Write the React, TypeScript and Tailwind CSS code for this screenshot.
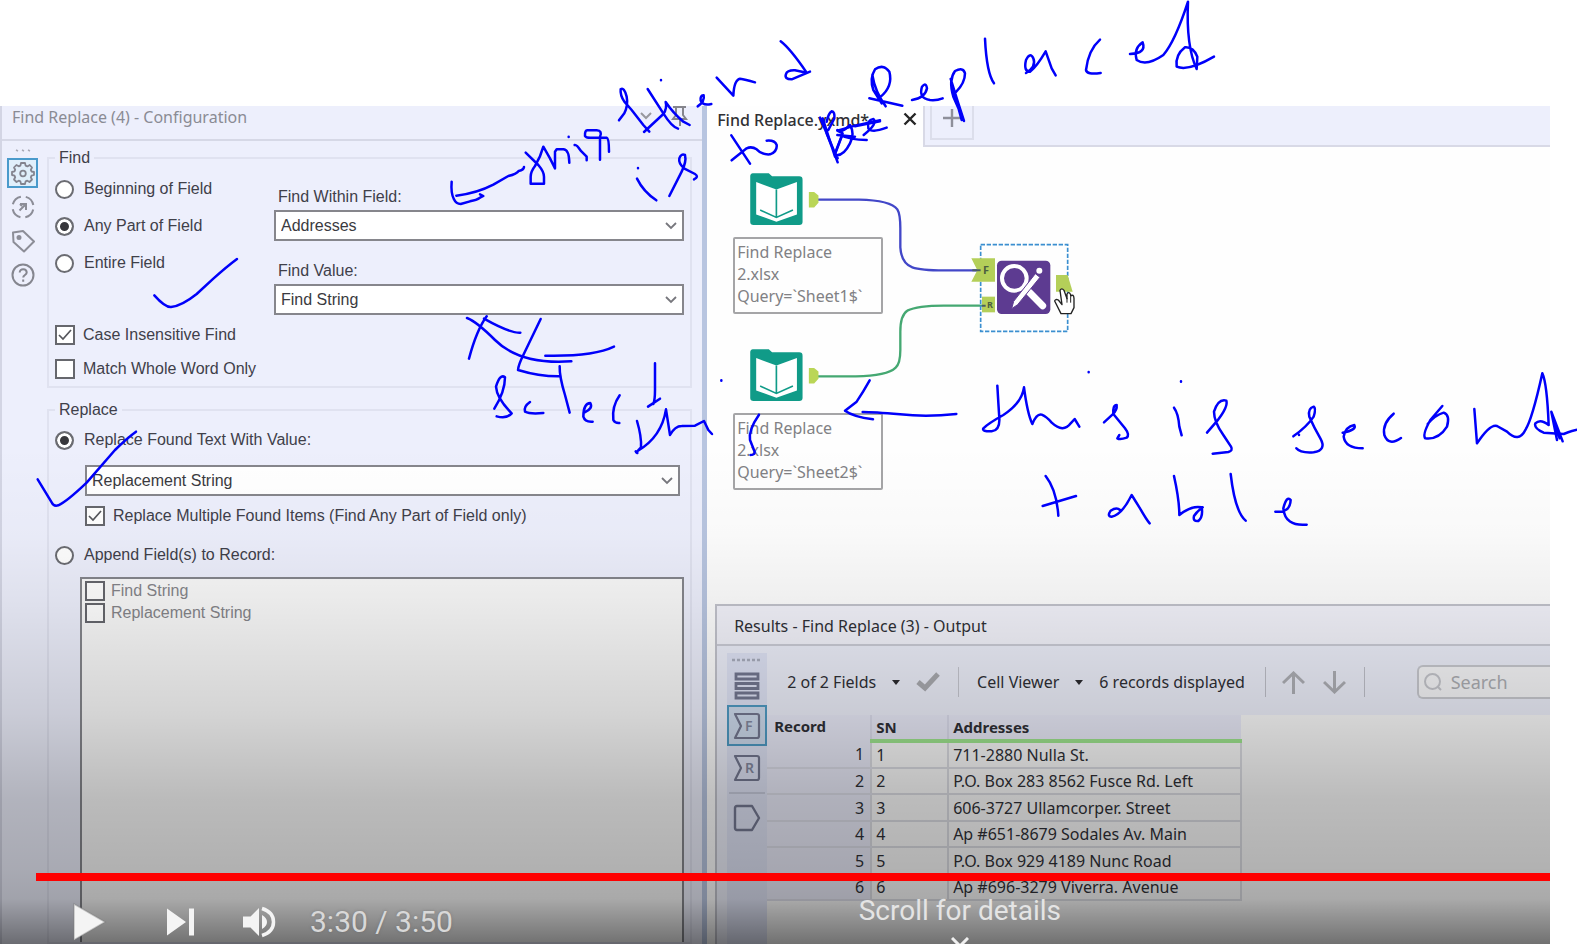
import type { ReactNode } from "react";

/* ---------- shared form parts ---------- */

function Radio({ name, label, checked }: { name: string; label: string; checked?: boolean }) {
  return (
    <label className="flex items-center gap-2.5 leading-5">
      <input
        type="radio"
        name={name}
        defaultChecked={checked}
        className="size-[19px] shrink-0 appearance-none rounded-full border-2 border-[#6b6c72] bg-white checked:bg-[#38383c] checked:shadow-[inset_0_0_0_3px_white]"
      />
      <span className="whitespace-nowrap">{label}</span>
    </label>
  );
}

function Check({ label, checked, muted }: { label: string; checked?: boolean; muted?: boolean }) {
  return (
    <label className={muted ? "flex items-center gap-1.5 leading-5 text-[#85858a]" : "flex items-center gap-2 leading-5"}>
      <span className="grid shrink-0 place-items-center">
        <input
          type="checkbox"
          defaultChecked={checked}
          className="peer col-start-1 row-start-1 size-5 appearance-none border-2 border-[#66676d] bg-white"
        />
        <svg viewBox="0 0 20 20" className="pointer-events-none invisible col-start-1 row-start-1 size-5 peer-checked:visible">
          <path d="M4 10l4 4 8-9" fill="none" stroke="#55565c" strokeWidth="1.7" />
        </svg>
      </span>
      <span className="whitespace-nowrap">{label}</span>
    </label>
  );
}

function Select({ id, value, label }: { id: string; value: string; label?: string }) {
  return (
    <div className="grid">
      <select
        id={id}
        aria-label={label}
        className="col-start-1 row-start-1 h-[31px] w-full appearance-none border-2 border-[#86868c] bg-white pl-[5px] text-base text-[#3a3a40]"
      >
        <option>{value}</option>
      </select>
      <svg viewBox="0 0 12 8" className="pointer-events-none col-start-1 row-start-1 mr-[7px] h-2 w-3 self-center justify-self-end">
        <path d="M1 1l5 5 5-5" fill="none" stroke="#77777d" strokeWidth="1.8" />
      </svg>
    </div>
  );
}

/* ---------- configuration panel ---------- */

function SideTools() {
  return (
    <nav className="flex w-[45px] shrink-0 flex-col items-center pt-2" aria-label="Configuration sections">
      <svg viewBox="0 0 16 4" className="mr-1 h-1 w-4">
        <path d="M1 1l2 1M7 1l2 1M13 1l2 1" stroke="#a9aab5" strokeWidth="1.5" />
      </svg>
      <button aria-label="Settings" className="mt-[5px] mr-1 grid h-[30px] w-[31px] place-items-center border-2 border-[#4a9acb] bg-[#e0effb]">
        <svg viewBox="0 0 24 24" className="size-6" fill="none" stroke="#83848f" strokeWidth="1.8" strokeLinejoin="round">
          <path d="M10 2h4l.6 2.6 1.8.8L18.700 4l2.300 2.500-1.200 2.300.7 1.700L23 11v3l-2.500.7-.7 1.700L21 18.500 18.500 21l-2.200-1.300-1.700.7L14 23h-4l-.6-2.600-1.700-.7L5.500 21 3 18.500l1.200-2.200-.7-1.700L1 14v-3l2.500-.6.7-1.700L3 6.500 5.400 4l2.300 1.300 1.700-.7z" />
          <circle cx="12" cy="12.500" r="2.800" />
        </svg>
      </button>
      <button aria-label="Navigation" className="mt-[7px] mr-1">
        <svg viewBox="0 0 24 24" className="size-6" fill="none" stroke="#8c8d97" strokeWidth="2">
          <circle cx="12" cy="12" r="10.500" strokeDasharray="11.500 5" strokeDashoffset="-2.500" />
          <path d="M8.500 15.500l6-6M9 9h6v6M9 9l2 2" />
        </svg>
      </button>
      <button aria-label="Annotation" className="mt-2.5 mr-1">
        <svg viewBox="0 0 24 24" className="size-6" fill="none" stroke="#8c8d97" strokeWidth="2" strokeLinejoin="round">
          <path d="M2 3.500l10-1.500 11 10.500L13 22.500 2.500 13z" />
          <circle cx="8" cy="8.500" r="1.500" fill="#8c8d97" />
        </svg>
      </button>
      <button aria-label="Help" className="mt-2.5 mr-1">
        <svg viewBox="0 0 24 24" className="size-6" fill="none" stroke="#85868f" strokeWidth="2">
          <circle cx="12" cy="12" r="10.500" />
          <path d="M8.700 9.500c0-4.500 7-4 7 0 0 2.500-3.500 2.500-3.500 5M12.200 16.500v2.200" />
        </svg>
      </button>
    </nav>
  );
}

function Group({ title, className, children }: { title: string; className: string; children: ReactNode }) {
  return (
    <fieldset className={`min-w-0 border-2 border-[#e0e2f0] ${className}`}>
      <legend className="h-5 px-1 leading-5">{title}</legend>
      {children}
    </fieldset>
  );
}

function ConfigurationPanel() {
  return (
    <section className="flex w-[45.3%] shrink-0 flex-col border-l-2 border-[#d3d5e4] bg-[#edeffc] font-['Liberation_Sans',sans-serif] text-base text-[#3f404a]">
      <header className="flex h-[35px] shrink-0 items-start justify-between border-b-2 border-[#d6d8e6] pr-3 pl-2.5 font-['Noto_Sans',sans-serif] text-base leading-[22px] text-[#8a8b94]">
        <h1>Find Replace (4) - Configuration</h1>
        <span className="flex gap-4">
          <button aria-label="Panel menu">
            <svg viewBox="0 0 16 20" className="h-5 w-4" fill="none" stroke="#98989e" strokeWidth="2">
              <path d="M3 7l5 5 5-5" />
            </svg>
          </button>
          <button aria-label="Pin panel">
            <svg viewBox="0 0 20 20" className="size-5" fill="none" stroke="#85858c" strokeWidth="2">
              <path d="M3 1h13M6 1v8l-3 4h13l-3-4V1M10 13v7" />
            </svg>
          </button>
        </span>
      </header>
      <div className="flex grow">
        <SideTools />
        <div className="flex min-w-0 grow flex-col pt-[7px] pr-2.5">
          <Group title="Find" className="h-[240px] px-1.5">
            <div className="flex">
              <div className="flex w-[219px] shrink-0 flex-col gap-px pt-[3px]">
                <div className="flex h-9 items-center"><Radio name="find-mode" label="Beginning of Field" /></div>
                <div className="flex h-9 items-center"><Radio name="find-mode" label="Any Part of Field" checked /></div>
                <div className="flex h-9 items-center"><Radio name="find-mode" label="Entire Field" /></div>
              </div>
              <div className="flex min-w-0 grow flex-col pt-[19px]">
                <label htmlFor="within" className="mb-[3px] ml-1 h-5 leading-5">Find Within Field:</label>
                <Select id="within" value="Addresses" />
                <label htmlFor="value" className="mt-5 mb-[3px] ml-1 h-5 leading-5">Find Value:</label>
                <Select id="value" value="Find String" />
              </div>
            </div>
            <div className="mt-2.5 flex flex-col gap-3.5">
              <Check label="Case Insensitive Find" checked />
              <Check label="Match Whole Word Only" />
            </div>
          </Group>
          <Group title="Replace" className="mt-3 flex grow flex-col pr-1.5 pl-1.5">
            <div className="flex h-full flex-col pt-2.5">
              <div className="flex h-5 items-center">
                <Radio name="replace-mode" label="Replace Found Text With Value:" checked />
              </div>
              <div className="mt-[15px] mr-1 ml-[30px]">
                <Select id="replacement" label="Replace Found Text With Value" value="Replacement String" />
              </div>
              <div className="mt-2.5 ml-[30px]">
                <Check label="Replace Multiple Found Items (Find Any Part of Field only)" checked />
              </div>
              <div className="mt-[19px] flex h-5 items-center">
                <Radio name="replace-mode" label="Append Field(s) to Record:" />
              </div>
              <div className="mt-3 ml-[25px] flex grow flex-col gap-0.5 border-2 border-b-0 border-[#85868c] bg-[#f9f9f9] px-[3px] pt-0.5">
                <Check label="Find String" muted />
                <Check label="Replacement String" muted />
              </div>
            </div>
          </Group>
        </div>
      </div>
    </section>
  );
}

/* ---------- workflow canvas ---------- */

function InputTool({ className, sheet }: { className: string; sheet: string }) {
  return (
    <div className={`absolute w-[150px] ${className}`}>
      <svg viewBox="0 0 210 160" className="ml-[17px] h-[53px] w-[70px]">
        <path d="M0 10Q0 2 8 1H56L66 10H148Q158 10 158 20V148Q158 157 148 157H10Q0 157 0 148Z" fill="#109b88" />
        <path d="M18 27L79 50L141 27V125L79 147L18 125Z" fill="#fff" />
        <path d="M79 50V134M30 112L79 134L129 112" fill="none" stroke="#109b88" strokeWidth="5" />
        <path d="M177 57H193L206 68V90L193 104H177Z" fill="#bad657" />
      </svg>
      <p className="mt-[11px] h-[77px] rounded-[2px] border-2 border-[#a5a5a7] px-0.5 pt-0.5 text-base leading-[22px] text-[#818184]">
        Find Replace
        <br />
        2.xlsx
        <br />
        Query=`{sheet}$`
      </p>
    </div>
  );
}

function Canvas() {
  return (
    <div className="relative h-[457px] shrink-0 overflow-hidden bg-[#fefefe]">
      <svg viewBox="0 0 400 457" className="absolute top-0 left-0 h-[457px] w-[400px]">
        <g transform="translate(-8 13) scale(.33333)" fill="none">
          <path d="M357 119H480Q575 121 595 148Q604 162 604 205V262Q607 310 640 322Q665 331 735 331H850" stroke="#4247c8" strokeWidth="7" />
          <path d="M357 649H470Q565 648 590 623Q604 610 604 570V515Q604 465 625 452Q655 437 735 437H860" stroke="#45a872" strokeWidth="7" />
          <path d="M845 254H1106V514H845Z" stroke="#3b8fd0" strokeWidth="5" strokeDasharray="13 5" />
          <path d="M817 295H888V365H817L835 331Z" fill="#b4cf59" />
          <path d="M849 410H888V457H849Z" fill="#b4cf59" />
          <path d="M820 331H845M849 437H860" stroke="#4a5c65" strokeWidth="6" />
          <rect x="894" y="302" width="160" height="160" rx="14" fill="#5d3b91" />
          <circle cx="946" cy="355" r="37" stroke="#fff" strokeWidth="12" />
          <path d="M991 397L1031 437" stroke="#fff" strokeWidth="21" strokeLinecap="round" />
          <path d="M1009 341L1023 352L956 434L938 446L944 424Z" fill="#fff" stroke="#5d3b91" strokeWidth="3" />
          <circle cx="1021" cy="332" r="9" fill="#fff" />
          <path d="M1071 345H1106L1121 395H1071Z" fill="#b4cf59" />
          <path d="M1083 391Q1088 382 1095 391L1104 416V402Q1110 393 1115 404V408Q1124 401 1125 415V443L1116 461H1086L1067 423Q1069 416 1078 420L1089 434Z" fill="#fff" stroke="#222" strokeWidth="4" strokeLinejoin="round" />
          <path d="M1104 414V428M1115 409V428" stroke="#222" strokeWidth="3" />
        </g>
        <text x="276" y="127" fontSize="11" fontWeight="700" fill="#4c6040">F</text>
        <text x="280" y="161" fontSize="9" fontWeight="700" fill="#4c6040">R</text>
      </svg>
      <InputTool className="top-[26px] left-[26px]" sheet="Sheet1" />
      <InputTool className="top-[202px] left-[26px]" sheet="Sheet2" />
    </div>
  );
}

function TabStrip() {
  return (
    <div className="flex h-[41px] shrink-0">
      <div className="flex w-[216px] shrink-0 items-start justify-between bg-[#fefefe] pr-1.5 pl-2.5 text-base leading-7 font-medium text-[#303034]">
        <span>Find Replace.yxmd*</span>
        <button aria-label="Close tab" className="pt-1.5">
          <svg viewBox="0 0 14 14" className="size-3.5"><path d="M1.500 1.500l11 11M12.500 1.500l-11 11" stroke="#252525" strokeWidth="2.400" /></svg>
        </button>
      </div>
      <div className="flex grow items-start border-b-2 border-l-2 border-[#d8d9e6] bg-[#edeffc] pl-[5px]">
        <button aria-label="New tab" className="grid h-[34px] w-11 place-items-center border-2 border-t-0 border-[#dcdeeb] pb-2">
          <svg viewBox="0 0 18 18" className="size-[18px]"><path d="M9 0v18M0 9h18" stroke="#8e8f9a" strokeWidth="2.400" /></svg>
        </button>
      </div>
    </div>
  );
}

/* ---------- results ---------- */

const records = [
  "711-2880 Nulla St.",
  "P.O. Box 283 8562 Fusce Rd. Left",
  "606-3727 Ullamcorper. Street",
  "Ap #651-8679 Sodales Av. Main",
  "P.O. Box 929 4189 Nunc Road",
  "Ap #696-3279 Viverra. Avenue",
];

function Anchor({ letter }: { letter: string }) {
  return (
    <svg viewBox="0 0 28 28" className="size-7">
      <path d="M2 2H24Q26 2 26 4V24Q26 26 24 26H2L8 14Z" fill="none" stroke="#747891" strokeWidth="2.200" strokeLinejoin="round" />
      <text x="12" y="19" fontSize="14" fontWeight="600" fill="#858aa0">{letter}</text>
    </svg>
  );
}

function ResultTools() {
  return (
    <nav className="flex w-10 shrink-0 flex-col items-center bg-[#dfe3f5]" aria-label="Result anchors">
      <svg viewBox="0 0 30 5" className="mt-1 h-[5px] w-[30px]"><path d="M0 3H30" stroke="#a9adbd" strokeWidth="2.500" strokeDasharray="3 2" /></svg>
      <button aria-label="Messages" className="mt-2.5">
        <svg viewBox="0 0 26 28" className="h-7 w-[26px]" fill="none" stroke="#747891" strokeWidth="2.800">
          <path d="M2 2H24V7H2ZM2 11.500H24V16.500H2ZM2 21H24V26H2Z" />
        </svg>
      </button>
      <button aria-label="Find input" className="mt-[5px] grid h-[41px] w-full place-items-center border-2 border-[#4f9bc4] bg-[#cfdcee]"><Anchor letter="F" /></button>
      <button aria-label="Replace input" className="mt-2"><Anchor letter="R" /></button>
      <hr className="mt-2.5 w-9 border-t-2 border-[#c6cadb]" />
      <button aria-label="Output" className="mt-2.5">
        <svg viewBox="0 0 28 28" className="size-7"><path d="M2 4Q2 2 4 2H19L26 14L19 26H4Q2 26 2 24Z" fill="none" stroke="#747891" strokeWidth="2.400" strokeLinejoin="round" /></svg>
      </button>
    </nav>
  );
}

function Caret() {
  return <svg viewBox="0 0 8 5" className="h-[5px] w-2"><path d="M0 0H8L4 5Z" fill="#2b2b30" /></svg>;
}

function ResultsPanel() {
  return (
    <section className="ml-2 flex grow flex-col border-t-2 border-l-2 border-[#c2c3cc] bg-[#edeffa] text-base text-[#2f3036]">
      <header className="flex h-10 shrink-0 items-center border-b-2 border-[#cbccd6] bg-[#f3f3fb] pl-[17px] pt-0.5">
        <h2>Results - Find Replace (3) - Output</h2>
      </header>
      <div className="flex grow pt-[7px] pl-2.5">
        <ResultTools />
        <div className="flex min-w-0 grow flex-col">
          <div className="flex h-[62px] shrink-0 items-center overflow-hidden pb-1 whitespace-nowrap">
            <button className="ml-5 flex items-center gap-4">2 of 2 Fields <Caret /></button>
            <button aria-label="Apply" className="ml-4">
              <svg viewBox="0 0 24 20" className="h-5 w-6"><path d="M2 10l7 6L22 2" fill="none" stroke="#aaabb0" strokeWidth="5" /></svg>
            </button>
            <span className="ml-[18px] h-[30px] w-0.5 bg-[#c7c8d1]" />
            <button className="ml-[18px] flex items-center gap-4">Cell Viewer <Caret /></button>
            <span className="ml-4">6 records displayed</span>
            <span className="ml-5 h-[30px] w-0.5 bg-[#bfc0c9]" />
            <button aria-label="Previous" className="ml-4">
              <svg viewBox="0 0 23 23" className="size-[23px]" fill="none" stroke="#aeafb5" strokeWidth="3"><path d="M11.500 23V2M1 12L11.500 2 22 12" /></svg>
            </button>
            <button aria-label="Next" className="ml-[18px]">
              <svg viewBox="0 0 23 23" className="size-[23px]" fill="none" stroke="#aeafb5" strokeWidth="3"><path d="M11.500 0V21M1 11L11.500 21 22 11" /></svg>
            </button>
            <span className="ml-[18px] h-[30px] w-0.5 bg-[#bfc0c9]" />
            <label className="ml-[52px] flex h-[34px] min-w-0 grow items-center gap-2 rounded-l-md border-2 border-r-0 border-[#c8c9cf] bg-[#f6f6f8] pl-1">
              <svg viewBox="0 0 20 20" className="size-5 shrink-0" fill="none" stroke="#c5c6cc" strokeWidth="2"><circle cx="9.500" cy="9.500" r="7.500" /><path d="M15 15l3 3" /></svg>
              <input type="search" aria-label="Search results" placeholder="Search" className="w-full min-w-0 bg-transparent text-lg outline-none placeholder:text-[#adaeb3]" />
            </label>
          </div>
          <div className="grow bg-[#fafafa]">
            <table className="w-[475px] table-fixed border-collapse text-left text-base leading-5">
              <colgroup>
                <col className="w-[104px]" />
                <col className="w-[77px]" />
                <col />
              </colgroup>
              <thead>
                <tr className="h-[26px] bg-[#eaebf9] text-[15px] leading-5 font-bold">
                  <th className="pb-1 pl-[7px]">Record</th>
                  <th className="border-b-4 border-l-2 border-b-[#9fe68f] border-l-[#dcdded] pl-1">SN</th>
                  <th className="border-b-4 border-l-2 border-b-[#9fe68f] border-l-[#dcdded] pl-1">Addresses</th>
                </tr>
              </thead>
              <tbody>
                {records.map((address, i) => (
                  <tr key={address} className="odd:h-[27px] even:h-[26px]">
                    <td className="border-b-2 border-[#dcdde8] bg-[#eaebf9] pr-1.5 text-right">{i + 1}</td>
                    <td className="border-2 border-t-0 border-[#dbdce2] pl-1">{i + 1}</td>
                    <td className="border-2 border-t-0 border-[#dbdce2] pl-1">{address}</td>
                  </tr>
                ))}
              </tbody>
            </table>
          </div>
        </div>
      </div>
    </section>
  );
}

/* ---------- video player overlay ---------- */

function PlayerControls() {
  return (
    <div className="absolute inset-x-0 bottom-0 flex h-[500px] flex-col justify-end bg-[linear-gradient(to_bottom,rgba(0,0,0,0)_0%,rgba(0,0,0,.02)_18%,rgba(0,0,0,.06)_31%,rgba(0,0,0,.15)_54%,rgba(0,0,0,.25)_71%,rgba(0,0,0,.29)_85%,rgba(0,0,0,.32)_91%,rgba(0,0,0,.55)_100%)] font-['Roboto',sans-serif] text-[#e4e4e4]">
      <div className="ml-9 h-2 bg-[#fe0000]" role="progressbar" aria-label="Playback" aria-valuenow={100} />
      <div className="flex h-[63px] items-start">
        <div className="flex grow basis-0 items-center pt-[21px] pl-[73px]">
          <button aria-label="Play">
            <svg viewBox="0 0 34 40" className="h-10 w-[34px]"><path d="M1 2L32 20 1 38Z" fill="#f4f4f4" stroke="#77777766" strokeWidth="1.500" /></svg>
          </button>
          <button aria-label="Next video" className="ml-[59px]">
            <svg viewBox="0 0 30 30" className="size-[30px]"><path d="M1 1.500L20 15 1 28.500ZM23 1.500H28V28.500H23Z" fill="#f4f4f4" /></svg>
          </button>
          <button aria-label="Mute" className="ml-[46px]">
            <svg viewBox="0 0 34 34" className="size-[34px]">
              <path d="M1 11.500H8.500L17 3V31L8.500 22.500H1ZM20 10Q25 13 25 17T20 24Z" fill="#f4f4f4" />
              <path d="M20 3.500Q31.500 7 31.500 17T20 30.500" fill="none" stroke="#f4f4f4" strokeWidth="3.500" />
            </svg>
          </button>
          <time className="ml-[34px] text-[30px] leading-8 whitespace-nowrap text-[#d8d8d8] [text-shadow:0_0_3px_#5556]">3:30 / 3:50</time>
        </div>
        <button className="mr-[489px] flex h-full flex-col items-center pt-3 text-[28px] leading-9 whitespace-nowrap">
          Scroll for details
          <svg viewBox="0 0 18 10" className="mt-2 h-2.5 w-[18px] shrink-0"><path d="M1 1L9 9 17 1" fill="none" stroke="#f0f0f0" strokeWidth="3" /></svg>
        </button>
      </div>
    </div>
  );
}

/* ---------- freehand ink ---------- */

const ink: { x: number; y: number; strokes: string[] }[] = [
  { x: 0, y: 90, strokes: ["M463 616Q495 652 513 651Q545 648 590 612L640 566Q680 530 711 507"] },
  { x: 0, y: 390, strokes: ["M113 268L155 337Q160 350 175 346Q200 335 260 278L345 180Q380 145 408 125"] },
  {
    x: 380,
    y: 30,
    strokes: [
      "M432 411Q431 420 416 423Q410 432 385 438L340 464Q290 490 229 497",
      "M215 455Q212 490 222 508Q228 522 242 522L270 514Q290 510 300 503L310 498 300 493",
      "M437 368L475 405Q492 425 492 440V461H452V440Q452 425 465 408Q482 380 490 350L510 385 525 415V365L530 358H550Q567 358 568 398",
      "M566 320v1M584 345Q590 343 602 362L620 380V391",
      "M660 389V320Q668 302 650 301H622Q614 302 615 318Q618 325 640 323H680Q687 325 687 365",
      "M717 271L733 250Q745 225 740 200Q732 170 722 178Q720 195 733 215L755 240 790 285 808 305",
      "M792 306L850 252Q862 235 857 216Q880 250 910 275L929 285",
      "M803 177L850 250Q875 290 894 296M843 150v1",
      "M953 229Q975 215 971 196Q960 195 962 212Q968 228 994 222",
      "M1010 143L1060 197Q1062 150 1080 146Q1095 148 1125 157",
      "M1202 34Q1230 55 1280 128M1290 125L1235 148Q1212 148 1218 132Q1222 120 1245 121L1280 128",
      "M774 414v1M771 446Q790 485 829 511",
      "M868 498L905 425Q920 395 915 375Q903 370 898 385Q895 400 912 415L945 432Q958 440 942 448",
      "M1054 316L1110 401M1055 391L1100 355Q1115 348 1130 358Q1145 375 1170 373Q1192 365 1190 345Q1185 330 1160 332",
    ],
  },
  {
    x: 800,
    y: 0,
    strokes: [
      "M60 353L80 400 113 487M80 365Q85 340 95 334Q105 335 103 355L85 390M68 355L105 470",
      "M80 400L105 460 128 400 112 392 165 377 240 361M165 379L240 364",
      "M105 465Q130 470 150 430Q165 400 150 375Q125 400 112 390M112 405L165 410M113 475L106 460 125 410M120 405Q150 420 200 420",
      "M191 405Q235 370 220 357Q200 360 205 385Q215 400 260 383",
      "M217 225Q225 275 257 319M208 295L307 317M240 292Q280 260 268 215Q250 190 225 208Q208 235 220 270L245 310",
      "M336 300Q375 295 381 265Q378 245 366 260Q355 295 390 300Q410 302 428 295",
      "M452 237L475 310 492 363 460 290Q445 240 465 213Q490 200 495 220Q495 250 467 277M455 250L485 360",
      "M555 116Q560 220 582 250",
      "M678 219Q710 200 700 175Q690 155 678 180Q670 215 690 215Q710 200 737 154L755 205 767 226",
      "M900 119Q865 150 858 210Q860 225 902 219",
      "M990 162Q1040 160 1028 127Q1000 145 1010 180Q1040 200 1090 165Q1125 125 1164 5Q1158 140 1190 207L1192 170Q1180 140 1155 142Q1125 165 1130 200Q1165 215 1242 170",
    ],
  },
  {
    x: 380,
    y: 240,
    strokes: [
      "M261 234Q290 245 345 300Q420 375 574 364M320 229Q290 270 267 356M312 236Q390 280 421 278",
      "M482 237L430 345Q415 375 414 390Q480 410 540 409M496 347Q640 350 702 320",
      "M539 379Q538 410 555 465L569 518",
      "M343 506Q375 455 375 412Q360 400 348 440Q350 475 395 520Q380 538 350 529",
      "M450 486Q430 500 435 515Q450 523 490 519",
      "M614 517Q640 505 631 489Q610 490 610 530Q615 547 638 545",
      "M719 466Q695 500 700 540Q705 550 718 549",
      "M825 370V450Q825 480 820 492M804 500L840 476",
      "M771 543Q785 590 783 622L769 637 774 632Q845 590 858 508L870 585Q885 558 905 558L945 557 972 543 985 570 996 582",
      "M767 634l5 5M1024 421v1M1137 524Q1105 570 1110 600L1124 635Q1125 645 1112 645",
    ],
  },
  {
    x: 700,
    y: 160,
    strokes: ["M509 661Q490 695 470 725L435 752Q460 770 519 778", "M488 756Q520 756 600 763Q680 772 769 762"],
  },
  {
    x: 940,
    y: 360,
    strokes: [
      "M172 77Q175 130 178 175Q180 212 155 214Q125 215 130 205Q145 190 190 165Q245 130 252 82Q262 160 277 192Q290 160 305 164Q320 170 335 188Q370 220 392 190L404 177 418 200",
      "M446 36v1M723 64v1",
      "M492 187L518 163Q532 150 530 135Q518 135 520 162L555 205Q570 225 560 233Q540 240 532 235L538 225",
      "M702 143Q715 160 718 200L725 226",
      "M801 218L832 182Q865 140 859 122Q835 115 822 155Q822 185 850 225L873 260Q880 272 865 276L818 281",
      "M317 348Q350 390 355 467M308 438L408 408",
      "M540 450Q530 440 512 452Q500 470 515 470Q545 465 575 405L600 445Q620 480 629 490",
      "M702 348Q718 420 718 465Q755 435 785 442Q790 470 775 483Q758 485 762 468Q770 455 788 442",
      "M872 342Q885 455 917 482",
      "M1006 455Q1050 460 1052 420Q1040 405 1030 445Q1035 500 1100 494",
    ],
  },
  {
    x: 1277,
    y: 360,
    strokes: [
      "M49 229Q90 200 110 170Q118 145 110 140Q92 145 97 170Q110 200 130 235Q150 270 110 277Q70 280 58 265M66 224v1",
      "M197 218Q240 210 232 195Q205 200 200 230Q205 265 257 265",
      "M350 161Q315 190 322 225Q335 260 372 234",
      "M496 138L460 180Q435 225 445 235Q485 240 510 200Q520 165 500 158Q475 165 452 192",
      "M592 147L600 250Q640 190 660 198L690 215Q725 250 745 210Q765 180 796 40Q810 70 815 195Q790 175 775 190Q770 205 800 218L860 222Q890 210 900 209",
      "M823 155L840 240M823 155L857 244M826 170L848 235",
    ],
  },
];

function Ink() {
  return (
    <svg viewBox="0 0 1577 944" className="pointer-events-none absolute top-0 left-0 h-[944px] w-[1577px]" aria-hidden="true">
      {ink.map((group) => (
        <g
          key={`${group.x}-${group.y}`}
          transform={`translate(${group.x} ${group.y}) scale(.33333)`}
          fill="none"
          stroke="#0000fa"
          strokeWidth="7.500"
          strokeLinecap="round"
          strokeLinejoin="round"
        >
          {group.strokes.map((d) => (
            <path key={d} d={d} />
          ))}
        </g>
      ))}
    </svg>
  );
}

export default function App() {
  return (
    <main className="relative flex min-h-screen flex-col overflow-hidden bg-white pt-[106px] font-['Noto_Sans',sans-serif]">
      <div className="relative mr-[27px] flex grow overflow-hidden">
        <ConfigurationPanel />
        <div className="flex min-w-0 grow flex-col border-l-[5px] border-[#b8c5e0] bg-[#fefefe]">
          <TabStrip />
          <Canvas />
          <ResultsPanel />
        </div>
        <PlayerControls />
      </div>
      <Ink />
    </main>
  );
}
